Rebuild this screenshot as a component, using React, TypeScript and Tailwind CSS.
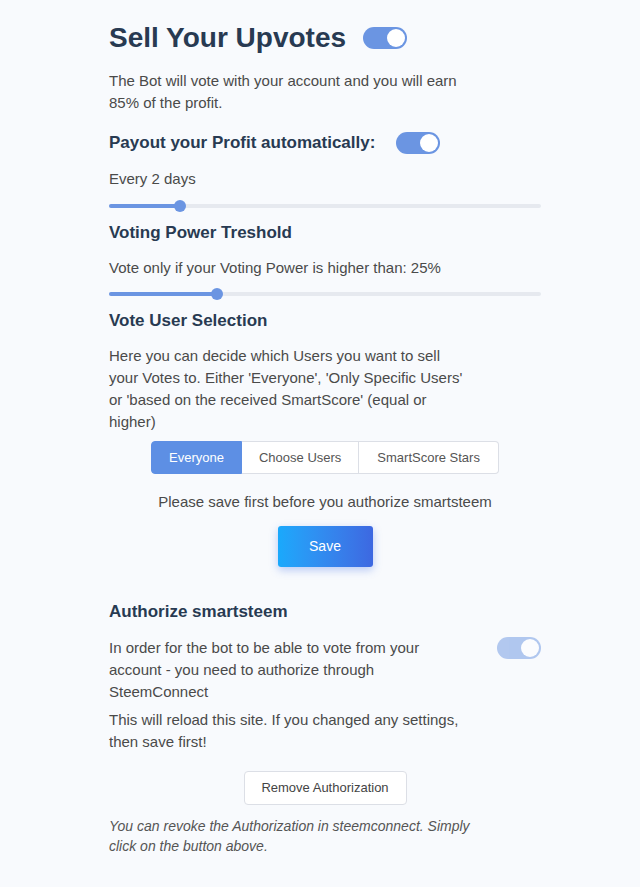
import React from "react";

function Toggle({ disabled = false }: { disabled?: boolean }) {
  return (
    <span
      className={
        "relative inline-block h-[22px] w-[44px] shrink-0 rounded-full bg-[#6b95e2] " +
        (disabled ? "opacity-50" : "")
      }
    >
      <span className="absolute right-[2px] top-[2px] h-[18px] w-[18px] rounded-full bg-white" />
    </span>
  );
}

function Slider({ pct }: { pct: number }) {
  return (
    <div className="relative h-[12px] w-full">
      <div className="absolute left-0 right-0 top-[4px] h-[4px] rounded-full bg-[#e6e9ef]" />
      <div
        className="absolute left-0 top-[4px] h-[4px] rounded-full bg-[#6b95e2]"
        style={{ width: pct + "%" }}
      />
      <div
        className="absolute top-0 h-[12px] w-[12px] -translate-x-1/2 rounded-full bg-[#6b95e2]"
        style={{ left: pct + "%" }}
      />
    </div>
  );
}

export default function App() {
  return (
    <div
      className="min-h-[887px] w-full bg-[#f8fafd] text-[#4a4a4a]"
      style={{ fontFamily: '"Liberation Sans", Arial, sans-serif' }}
    >
      <div className="ml-[109px] flex w-[432px] flex-col pt-[21px]">
        <div className="flex h-[34px] items-center gap-[17px]">
          <h1 className="text-[28px] font-bold leading-[34px] text-[#283a52]">Sell Your Upvotes</h1>
          <Toggle />
        </div>
        <p className="mt-[15px] max-w-[364px] text-[15px] leading-[22px]">
          The Bot will vote with your account and you will earn 85% of the profit.
        </p>
        <div className="mt-[18px] flex h-[22px] items-center gap-[21px]">
          <h2 className="text-[17px] font-bold leading-[22px] text-[#283a52]">
            Payout your Profit automatically:
          </h2>
          <Toggle />
        </div>
        <p className="mt-[14px] text-[15px] leading-[22px]">Every 2 days</p>
        <div className="mt-[10px]">
          <Slider pct={16.5} />
        </div>
        <h2 className="mt-[10px] text-[17px] font-bold leading-[22px] text-[#283a52]">
          Voting Power Treshold
        </h2>
        <p className="mt-[13px] text-[15px] leading-[22px]">
          Vote only if your Voting Power is higher than: 25%
        </p>
        <div className="mt-[9px]">
          <Slider pct={25} />
        </div>
        <h2 className="mt-[10px] text-[17px] font-bold leading-[22px] text-[#283a52]">
          Vote User Selection
        </h2>
        <p className="mt-[13px] max-w-[364px] text-[15px] leading-[22px]">
          Here you can decide which Users you want to sell your Votes to. Either 'Everyone', 'Only
          Specific Users' or 'based on the received SmartScore' (equal or higher)
        </p>
        <div className="mt-[8px] flex justify-center">
          <div className="flex h-[33px] text-[13px] leading-[15px]">
            <button className="rounded-l-[4px] border border-[#5d8fe4] bg-[#5d8fe4] px-[17px] text-white">
              Everyone
            </button>
            <button className="border-y border-r border-[#dcdfe6] bg-white px-[17px] text-[#555]">
              Choose Users
            </button>
            <button className="rounded-r-[4px] border-y border-r border-[#dcdfe6] bg-white px-[18px] text-[#555]">
              SmartScore Stars
            </button>
          </div>
        </div>
        <p className="mt-[17px] text-center text-[15px] leading-[22px]">
          Please save first before you authorize smartsteem
        </p>
        <div className="mt-[13px] flex justify-center">
          <button className="h-[41px] w-[95px] rounded-[3px] bg-gradient-to-r from-[#19a9fc] to-[#3d68e1] text-[14px] text-white shadow-[0_3px_8px_rgba(60,110,230,0.35)]">
            Save
          </button>
        </div>
        <h2 className="mt-[34px] text-[17px] font-bold leading-[22px] text-[#283a52]">
          Authorize smartsteem
        </h2>
        <div className="mt-[14px] flex items-start justify-between">
          <div className="max-w-[364px] text-[15px] leading-[22px]">
            <p>In order for the bot to be able to vote from your account - you need to authorize through SteemConnect</p>
            <p className="mt-[6px]">
              This will reload this site. If you changed any settings, then save first!
            </p>
          </div>
          <Toggle disabled />
        </div>
        <div className="mt-[18px] flex justify-center">
          <button className="h-[34px] w-[163px] rounded-[4px] border border-[#dcdfe6] bg-white text-[13px] text-[#444]">
            Remove Authorization
          </button>
        </div>
        <p className="mt-[11px] max-w-[364px] text-[14px] italic leading-[20px] text-[#555]">
          You can revoke the Authorization in steemconnect. Simply click on the button above.
        </p>
      </div>
    </div>
  );
}
